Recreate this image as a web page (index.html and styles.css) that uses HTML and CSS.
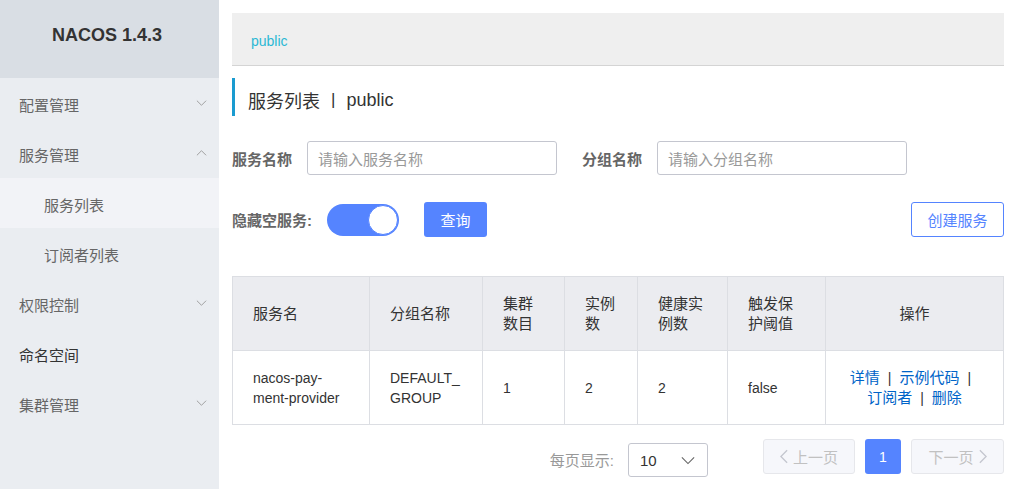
FILE: index.html
```html
<!DOCTYPE html>
<html lang="zh">
<head>
<meta charset="utf-8">
<title>Nacos</title>
<link rel="stylesheet" href="styles.css">
</head>
<body>
<div class="app">
  <aside class="sidebar">
    <div class="brand">NACOS 1.4.3</div>
    <ul class="menu">
      <li class="menu-item"><span>配置管理</span><svg class="chev" viewBox="0 0 12 8"><path d="M1 1.5 L6 6.5 L11 1.5" fill="none" stroke="#999" stroke-width="1"/></svg></li>
      <li class="menu-item"><span>服务管理</span><svg class="chev" viewBox="0 0 12 8"><path d="M1 6.5 L6 1.5 L11 6.5" fill="none" stroke="#999" stroke-width="1"/></svg></li>
      <li class="menu-item sub active"><span>服务列表</span></li>
      <li class="menu-item sub"><span>订阅者列表</span></li>
      <li class="menu-item"><span>权限控制</span><svg class="chev" viewBox="0 0 12 8"><path d="M1 1.5 L6 6.5 L11 1.5" fill="none" stroke="#999" stroke-width="1"/></svg></li>
      <li class="menu-item dark"><span>命名空间</span></li>
      <li class="menu-item"><span>集群管理</span><svg class="chev" viewBox="0 0 12 8"><path d="M1 1.5 L6 6.5 L11 1.5" fill="none" stroke="#999" stroke-width="1"/></svg></li>
    </ul>
  </aside>
  <main class="main">
    <div class="crumb"><span class="ns">public</span></div>
    <h1 class="page-title">服务列表<span class="sep">|</span>public</h1>
    <div class="form-row">
      <label class="label">服务名称</label>
      <div class="input"><span class="ph">请输入服务名称</span></div>
      <label class="label second">分组名称</label>
      <div class="input"><span class="ph">请输入分组名称</span></div>
    </div>
    <div class="form-row row2">
      <label class="label hide">隐藏空服务:</label>
      <div class="switch"><span class="knob"></span></div>
      <button class="btn primary">查询</button>
      <div class="spacer"></div>
      <button class="btn outline">创建服务</button>
    </div>
    <table class="table">
      <colgroup>
        <col style="width:137px"><col style="width:113px"><col style="width:82px"><col style="width:73px"><col style="width:90px"><col style="width:98px"><col>
      </colgroup>
      <thead>
        <tr>
          <th>服务名</th>
          <th>分组名称</th>
          <th>集群<br>数目</th>
          <th>实例<br>数</th>
          <th>健康实<br>例数</th>
          <th>触发保<br>护阈值</th>
          <th class="center">操作</th>
        </tr>
      </thead>
      <tbody>
        <tr>
          <td>nacos-pay-<br>ment-provider</td>
          <td>DEFAULT_<br>GROUP</td>
          <td>1</td>
          <td>2</td>
          <td>2</td>
          <td>false</td>
          <td class="center ops"><a>详情</a><i>|</i><a>示例代码</a><i>|</i><br><a>订阅者</a><i>|</i><a>删除</a></td>
        </tr>
      </tbody>
    </table>
    <div class="pager">
      <span class="per">每页显示:</span>
      <div class="select"><span>10</span><svg class="sel-chev" viewBox="0 0 16 10"><path d="M1 1.5 L8 8.5 L15 1.5" fill="none" stroke="#666" stroke-width="1.3"/></svg></div>
      <button class="pbtn disabled prev"><svg viewBox="0 0 9 16"><path d="M8 1 L1 8 L8 15" fill="none" stroke="#c4c6cf" stroke-width="1.5"/></svg>上一页</button>
      <button class="pbtn current">1</button>
      <button class="pbtn disabled next">下一页<svg viewBox="0 0 9 16"><path d="M1 1 L8 8 L1 15" fill="none" stroke="#c4c6cf" stroke-width="1.5"/></svg></button>
    </div>
  </main>
</div>
</body>
</html>
```
FILE: styles.css
```css
* { box-sizing: border-box; }
html, body { margin: 0; padding: 0; }
body {
  font-family: "Liberation Sans", "Noto Sans CJK SC", sans-serif;
  font-size: 14px;
  color: #333;
  background: #fff;
  width: 1014px;
  height: 489px;
  overflow: hidden;
}
.app { display: flex; height: 489px; }
.sidebar {
  width: 219px;
  flex: none;
  background: #eaedf1;
  height: 100%;
}
.brand {
  height: 78px;
  background: #d9dee4;
  display: flex;
  align-items: center;
  justify-content: center;
  font-weight: bold;
  font-size: 18px;
  color: #333;
  padding-bottom: 8px;
  padding-right: 5px;
}
.menu { list-style: none; margin: 0; padding: 0; }
.menu-item {
  height: 50px;
  display: flex;
  align-items: center;
  justify-content: space-between;
  padding: 3px 12px 0 19px;
  color: #666;
  font-size: 15px;
}
.menu-item.sub { padding-left: 44px; }
.menu-item.active { background: #f2f3f7; }
.menu-item.dark { color: #333; }
.chev { width: 11px; height: 8px; margin-top: -4px; }

.main { flex: 1; padding: 13px 10px 0 13px; min-width: 0; }
.crumb {
  height: 53px;
  background: #efefef;
  border-bottom: 1px solid #d4d4d4;
  display: flex;
  align-items: center;
  padding-left: 19px;
  padding-top: 4px;
}
.ns { color: #2bb8d4; font-size: 14px; }
.page-title {
  margin: 12px 0 0 0;
  height: 38px;
  border-left: 3px solid #1a9bd0;
  padding-left: 13px;
  font-size: 18px;
  font-weight: normal;
  color: #333;
  display: flex;
  align-items: center;
  padding-top: 6px;
}
.page-title .sep { margin: 0 11px; font-size: 17px; }
.form-row {
  display: flex;
  align-items: center;
  margin-top: 25px;
  height: 34px;
}
.label {
  font-weight: bold;
  color: #666;
  font-size: 15px;
  width: 75px;
  flex: none;
}
.label.second { margin-left: 25px; }
.input {
  width: 250px;
  height: 34px;
  border: 1px solid #c4c6cf;
  border-radius: 3px;
  display: flex;
  align-items: center;
  padding-left: 10px;
}
.ph { color: #999; font-size: 15px; }
.row2 { margin-top: 27px; height: 35px; }
.label.hide { width: 95px; }
.switch {
  width: 72px;
  height: 32px;
  border-radius: 16px;
  background: #5584ff;
  position: relative;
  flex: none;
}
.knob {
  position: absolute;
  right: 1px;
  top: 1px;
  width: 30px;
  height: 30px;
  border-radius: 50%;
  background: #fff;
  border: 1px solid #5584ff;
}
.btn {
  font-family: inherit;
  font-size: 15px;
  height: 35px;
  border-radius: 3px;
  cursor: pointer;
  padding: 0;
}
.btn.primary {
  margin-left: 25px;
  width: 63px;
  background: #5584ff;
  border: none;
  color: #fff;
}
.spacer { flex: 1; }
.btn.outline {
  width: 93px;
  background: #fff;
  border: 1px solid #5584ff;
  color: #5584ff;
}
.table {
  margin-top: 39px;
  width: 772px;
  border-collapse: collapse;
  table-layout: fixed;
}
.table th, .table td {
  border: 1px solid #dcdee3;
  text-align: left;
  padding: 0 8px 0 20px;
  line-height: 20px;
  font-weight: normal;
  font-size: 14px;
  color: #333;
  vertical-align: middle;
}
.table th { background: #ebecf0; height: 74px; font-size: 15px; }
.table td { height: 74px; }
.table .center { text-align: center; padding: 0 4px; }
.table td.ops { font-size: 15px; }
.ops a { color: #0064c8; }
.ops i { font-style: normal; color: #333; margin: 0 8px; font-size: 14px; }
.pager {
  display: flex;
  align-items: flex-start;
  justify-content: flex-end;
  margin-top: 14px;
  height: 40px;
}
.per { color: #999; font-size: 15px; margin-right: 14px; margin-top: 10px; }
.select {
  width: 80px;
  height: 34px;
  border: 1px solid #c4c6cf;
  border-radius: 3px;
  display: flex;
  align-items: center;
  justify-content: space-between;
  padding: 0 12px 0 11px;
  margin-top: 4px;
  margin-right: 55px;
}
.select span { font-size: 15px; color: #333; }
.sel-chev { width: 14px; height: 9px; }
.pbtn {
  font-family: inherit;
  height: 35px;
  border-radius: 3px;
  font-size: 15px;
  display: flex;
  align-items: center;
  justify-content: center;
  gap: 5px;
  padding: 0;
}
.pbtn svg { width: 8px; height: 15px; }
.pbtn.disabled {
  width: 92px;
  background: #f6f7fb;
  border: 1px solid #e6e7eb;
  color: #c1c1c1;
}
.pbtn.current {
  width: 36px;
  margin: 0 10px;
  background: #5584ff;
  border: none;
  color: #fff;
  font-size: 14px;
}
.pbtn.next { width: 93px; }
```
